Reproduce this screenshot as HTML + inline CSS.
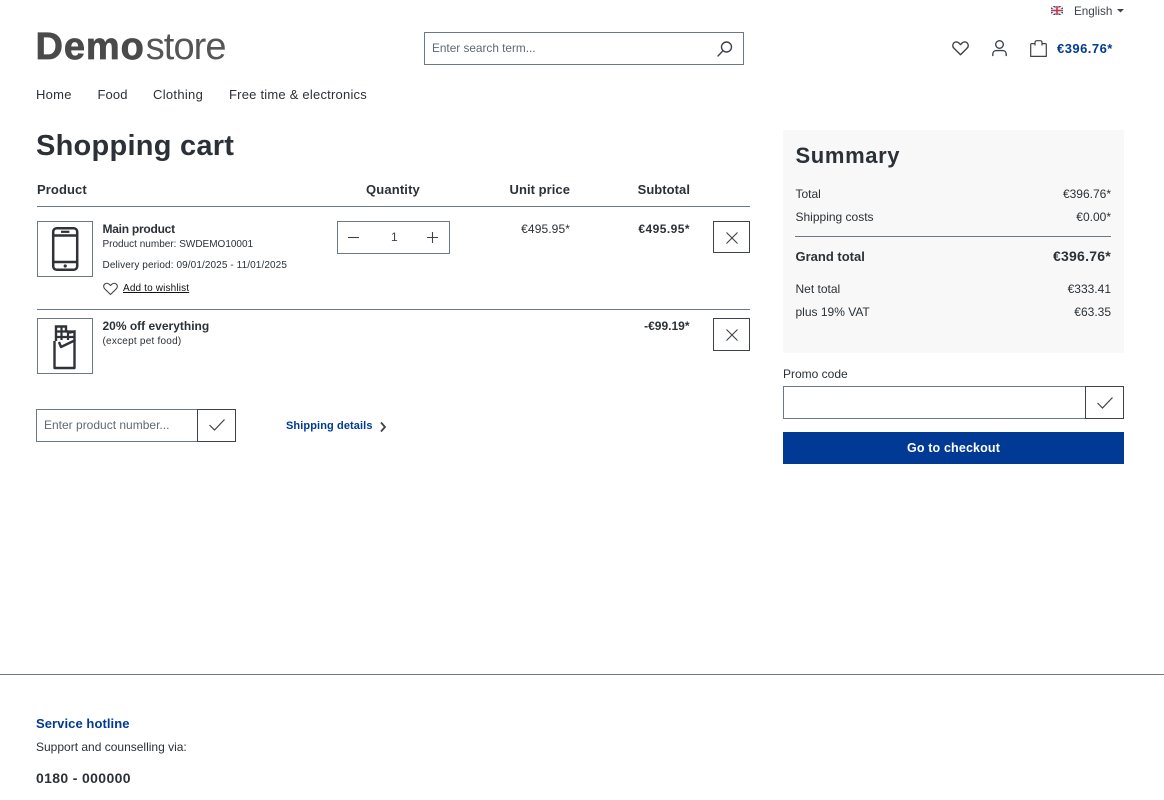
<!DOCTYPE html>
<html lang="en">
<head>
<meta charset="utf-8">
<title>Shopping cart</title>
<style>
html,body{margin:0;padding:0;background:#fff;}
body{width:1164px;height:800px;position:relative;overflow:hidden;font-family:"Liberation Sans",Arial,sans-serif;color:#2b3136;}
.t{position:absolute;white-space:nowrap;line-height:20px;height:20px;}
.r{text-align:right;}
.b{font-weight:700;}
.box{position:absolute;box-sizing:border-box;border:1px solid #6d7885;background:#fff;}
.dk{border-color:#3e4348;}
.line{position:absolute;height:1px;background:#6d7885;}
svg{position:absolute;overflow:visible;fill:none;stroke:#3e4348;}
svg.pi{stroke:#2f3337;}
.blue{color:#003a94;}
</style>
</head>
<body>
<!-- top bar -->
<svg style="left:1051px;top:6px" width="12" height="9" viewBox="0 0 12 9">
<rect width="12" height="9" fill="#3d4a80" stroke="none"/>
<path d="M0 0L12 9M12 0L0 9" style="stroke:#eee" stroke-width="2"/>
<path d="M6 0V9M0 4.5H12" style="stroke:#eee" stroke-width="3"/>
<path d="M6 0V9M0 4.5H12" style="stroke:#c8344a" stroke-width="1.6"/>
</svg>
<span class="t" style="left:1074px;top:2px;font-size:11.7px;color:#3e4348">English</span>
<svg style="left:1117px;top:9px" width="7" height="4"><path d="M0 0H7L3.5 3.5Z" fill="#3e4348" stroke="none"/></svg>

<!-- logo -->
<span class="t" style="left:35.5px;top:27px;line-height:40px;height:40px;font-size:38px;color:#4a4a4a"><b style="letter-spacing:.9px;-webkit-text-stroke:.7px #4a4a4a">Demo</b><span style="letter-spacing:-.9px;margin-left:1px;color:#555">store</span></span>

<!-- search -->
<div class="box" style="left:424px;top:32px;width:320px;height:33px"></div>
<span class="t" style="left:432px;top:38px;font-size:11.8px;color:#5f6872">Enter search term...</span>
<svg style="left:717px;top:41px" width="16" height="16" viewBox="0 0 16 16" stroke-width="1.4"><circle cx="9.5" cy="6" r="5"/><path d="M6 9.7L1 15" stroke-linecap="round"/></svg>

<!-- header icons -->
<svg style="left:952px;top:41px" width="17" height="15" viewBox="0 0 17 15" stroke-width="1.4" stroke-linejoin="round"><path d="M8.5 13.8L2 7.3C.3 5.6.4 3.2 1.9 1.9 3.4.6 5.6.7 7 2.1L8.5 3.6 10 2.1C11.4.7 13.6.6 15.1 1.9 16.6 3.2 16.7 5.6 15 7.3Z"/></svg>
<svg style="left:992px;top:40px" width="15" height="16" viewBox="0 0 15 16" stroke-width="1.4" stroke-linecap="round"><circle cx="7.5" cy="4.5" r="3.8"/><path d="M.8 15.5V14C.8 11.6 2.6 10.6 4.5 10.6H10.5C12.4 10.6 14.2 11.6 14.2 14V15.5"/></svg>
<svg style="left:1030px;top:40px" width="17" height="17" viewBox="0 0 17 17" stroke-width="1.2" stroke-linejoin="round"><path d="M4.6 3.6H1.8C1 3.6.7 4 .7 4.6V16.4H16.3V4.6C16.3 4 16 3.6 15.2 3.6H12.6M5 5.5V2.5C5 1.3 5.8.7 6.8.7H10.2C11.2.7 12 1.3 12 2.5V5.5"/></svg>
<span class="t b blue" style="left:1057px;top:39px;font-size:13px;letter-spacing:.47px">€396.76*</span>

<!-- nav -->
<span class="t" style="left:36px;top:85px;font-size:13px;letter-spacing:.25px">Home</span>
<span class="t" style="left:97.5px;top:85px;font-size:13px;letter-spacing:.1px">Food</span>
<span class="t" style="left:153px;top:85px;font-size:13px;letter-spacing:.3px">Clothing</span>
<span class="t" style="left:229px;top:85px;font-size:13px;letter-spacing:.22px">Free time &amp; electronics</span>

<!-- heading -->
<span class="t b" style="left:36px;top:136px;font-size:29px;letter-spacing:.25px">Shopping cart</span>

<!-- table header -->
<span class="t b" style="left:37px;top:180px;font-size:13px;letter-spacing:.1px">Product</span>
<span class="t b" style="left:366px;top:180px;font-size:13px;letter-spacing:.15px">Quantity</span>
<span class="t b r" style="left:470px;width:100px;top:180px;font-size:13px;letter-spacing:.05px">Unit price</span>
<span class="t b r" style="left:590px;width:100px;top:180px;font-size:13px;letter-spacing:.05px">Subtotal</span>
<div class="line" style="left:37px;top:206px;width:713px"></div>

<!-- row 1 -->
<div class="box" style="left:37px;top:221px;width:56px;height:56px"></div>
<svg class="pi" style="left:51px;top:226px" width="28" height="46" viewBox="0 0 28 46" stroke-width="2.5"><rect x="2.2" y="2.2" width="24" height="41.6" rx="3.5"/><path d="M2 9.5H26.4M2 36H26.4"/><path d="M10 5.8H18.4" stroke-width="2.2"/><circle cx="14.2" cy="40" r="1.6" fill="#2f3337" stroke="none"/></svg>
<span class="t b" style="left:102.5px;top:219px;font-size:12px;letter-spacing:-.25px">Main product</span>
<span class="t" style="left:102.5px;top:235px;font-size:10px">Product number: SWDEMO10001</span>
<span class="t" style="left:102.5px;top:256px;font-size:10px;letter-spacing:.1px">Delivery period: 09/01/2025 - 11/01/2025</span>
<svg style="left:103px;top:282px" width="15" height="14" viewBox="0 0 17 15" stroke-width="1.2" stroke-linejoin="round"><path d="M8.5 13.8L2 7.3C.3 5.6.4 3.2 1.9 1.9 3.4.6 5.6.7 7 2.1L8.5 3.6 10 2.1C11.4.7 13.6.6 15.1 1.9 16.6 3.2 16.7 5.6 15 7.3Z"/></svg>
<span class="t" style="left:123px;top:279px;font-size:10px;text-decoration:underline;color:#111;letter-spacing:.15px">Add to wishlist</span>

<div class="box" style="left:337px;top:221px;width:113px;height:33px"></div>
<svg style="left:348px;top:232px" width="12" height="12" stroke-width="1.1"><path d="M0 5.5H11"/></svg>
<span class="t" style="left:391px;top:227px;font-size:12px;color:#3e4348">1</span>
<svg style="left:427px;top:232px" width="12" height="12" stroke-width="1.1"><path d="M0 5.5H11M5.5 0V11"/></svg>
<span class="t r" style="left:470px;width:100px;top:219px;font-size:12px;letter-spacing:.1px">€495.95*</span>
<span class="t b r" style="left:590px;width:100px;top:219px;font-size:12px;letter-spacing:.45px">€495.95*</span>
<div class="box dk" style="left:713px;top:221px;width:37px;height:32px"></div>
<svg style="left:726px;top:232px" width="12" height="12" stroke-width="1.1"><path d="M.5 .5L11.5 11.5M11.5 .5L.5 11.5"/></svg>

<div class="line" style="left:37px;top:309px;width:713px"></div>

<!-- row 2 -->
<div class="box" style="left:37px;top:318px;width:56px;height:56px"></div>
<svg class="pi" style="left:52px;top:325px" width="26" height="44" viewBox="0 0 26 44" stroke-width="2.4"><path d="M4 16V1.5H14V6L18 7.5L22.5 6.5V16"/><path d="M4 6.5H22.5M4 12H22.5M9.5 1.5V15M16 6V15" stroke-width="2.2"/><path d="M2.5 16V43H22.5V15.5L9 22L7 17" stroke-linejoin="round"/></svg>
<span class="t b" style="left:102.5px;top:316px;font-size:12px">20% off everything</span>
<span class="t" style="left:102.5px;top:332px;font-size:10px;letter-spacing:.23px">(except pet food)</span>
<span class="t b r" style="left:589.5px;width:100px;top:316px;font-size:12px">-€99.19*</span>
<div class="box dk" style="left:713px;top:318px;width:37px;height:33px"></div>
<svg style="left:726px;top:329px" width="12" height="12" stroke-width="1.1"><path d="M.5 .5L11.5 11.5M11.5 .5L.5 11.5"/></svg>

<!-- add product -->
<div class="box" style="left:36px;top:409px;width:162px;height:33px"></div>
<div class="box dk" style="left:197px;top:409px;width:39px;height:33px;background:transparent"></div>
<span class="t" style="left:44px;top:415px;font-size:12px;color:#5f6872">Enter product number...</span>
<svg style="left:209px;top:419px" width="16" height="12" stroke-width="1.2"><path d="M.5 6L5.5 11L15.5 .5"/></svg>
<span class="t b blue" style="left:286px;top:416px;font-size:11px;letter-spacing:.1px">Shipping details</span>
<svg style="left:380px;top:422px" width="6" height="10" stroke-width="1.8"><path d="M1 .5L5 5L1 9.5"/></svg>

<!-- summary -->
<div style="position:absolute;left:783px;top:130px;width:341px;height:223px;background:#f8f8f8"></div>
<span class="t b" style="left:795.5px;top:146px;font-size:22px;letter-spacing:.63px">Summary</span>
<span class="t" style="left:795.5px;top:184px;font-size:12px">Total</span>
<span class="t r" style="left:1011px;width:100px;top:184px;font-size:12px">€396.76*</span>
<span class="t" style="left:795.5px;top:207px;font-size:12px">Shipping costs</span>
<span class="t r" style="left:1011px;width:100px;top:207px;font-size:12px">€0.00*</span>
<div class="line" style="left:795px;top:236px;width:316px"></div>
<span class="t b" style="left:795.5px;top:247px;font-size:13px">Grand total</span>
<span class="t b r" style="left:1011px;width:100px;top:246px;font-size:14px;letter-spacing:.25px">€396.76*</span>
<span class="t" style="left:795.5px;top:279px;font-size:12px">Net total</span>
<span class="t r" style="left:1011px;width:100px;top:279px;font-size:12px">€333.41</span>
<span class="t" style="left:795.5px;top:302px;font-size:12px">plus 19% VAT</span>
<span class="t r" style="left:1011px;width:100px;top:302px;font-size:12px">€63.35</span>

<!-- promo -->
<span class="t" style="left:783px;top:364px;font-size:12px">Promo code</span>
<div class="box" style="left:783px;top:386px;width:303px;height:33px"></div>
<div class="box dk" style="left:1085px;top:386px;width:39px;height:33px;background:transparent"></div>
<svg style="left:1097px;top:397px" width="16" height="12" stroke-width="1.2"><path d="M.5 6L5.5 11L15.5 .5"/></svg>
<div style="position:absolute;left:783px;top:432px;width:341px;height:32px;background:#003a94;color:#fff;font-weight:700;font-size:12.5px;letter-spacing:.15px;line-height:32px;text-align:center">Go to checkout</div>

<!-- footer -->
<div class="line" style="left:0;top:674px;width:1164px"></div>
<span class="t b blue" style="left:36px;top:714px;font-size:13px;letter-spacing:.07px">Service hotline</span>
<span class="t" style="left:36px;top:737px;font-size:12px">Support and counselling via:</span>
<span class="t b" style="left:36px;top:768px;font-size:14px;letter-spacing:.35px">0180 - 000000</span>
</body>
</html>
